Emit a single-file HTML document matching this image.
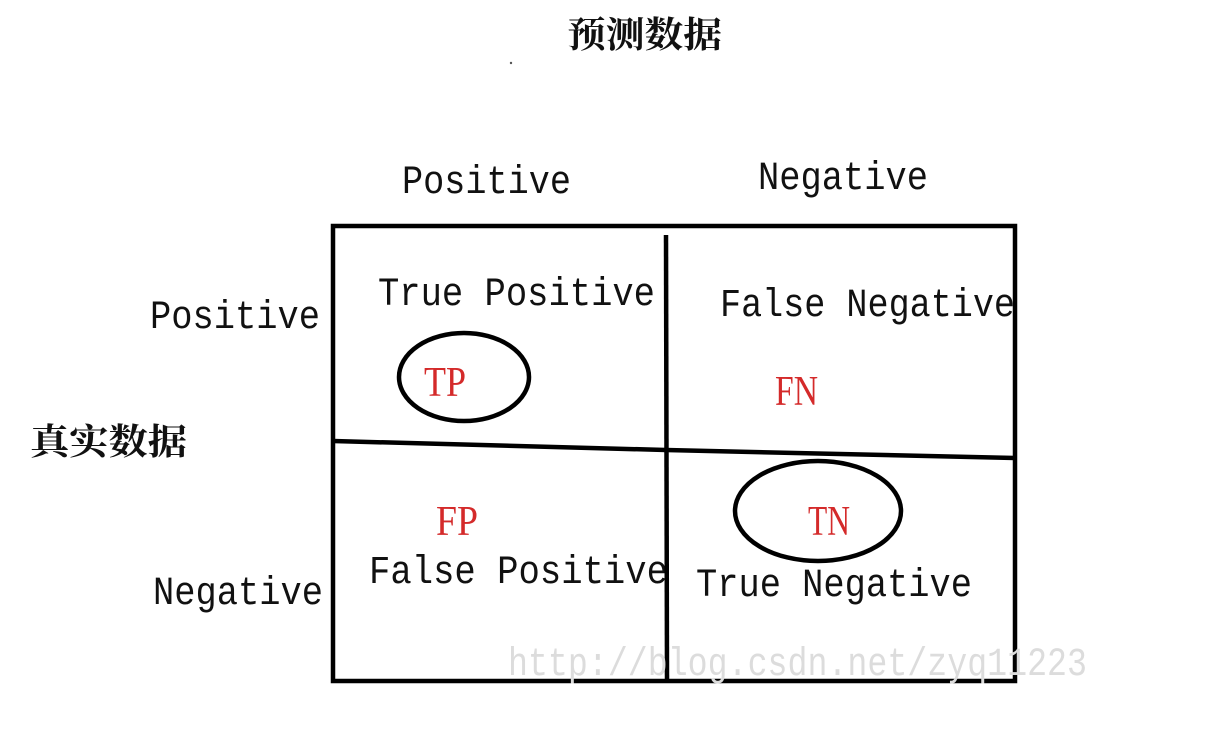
<!DOCTYPE html>
<html><head><meta charset="utf-8"><style>html,body{margin:0;padding:0;background:#fff}svg{display:block}</style></head><body>
<svg width="1212" height="744" viewBox="0 0 1212 744" xmlns="http://www.w3.org/2000/svg">
<rect width="1212" height="744" fill="#fff"/>
<g font-family="'Liberation Mono','Noto Sans CJK SC',monospace" fill="#111" lengthAdjust="spacingAndGlyphs">
<text x="567" y="47" font-size="36" font-family="'Noto Serif CJK SC','Noto Sans CJK SC',serif" font-weight="bold" textLength="155" lengthAdjust="spacingAndGlyphs">预测数据</text>
<text x="30" y="454" font-size="36" font-family="'Noto Serif CJK SC','Noto Sans CJK SC',serif" font-weight="bold" textLength="157" lengthAdjust="spacingAndGlyphs">真实数据</text>
<text x="402" y="193" font-size="40" textLength="169" lengthAdjust="spacingAndGlyphs">Positive</text>
<text x="758" y="189" font-size="40" textLength="170" lengthAdjust="spacingAndGlyphs">Negative</text>
<text x="150" y="328" font-size="40" textLength="170" lengthAdjust="spacingAndGlyphs">Positive</text>
<text x="153" y="604" font-size="40" textLength="170" lengthAdjust="spacingAndGlyphs">Negative</text>
<text x="378" y="305" font-size="40" textLength="277" lengthAdjust="spacingAndGlyphs">True Positive</text>
<text x="720" y="316" font-size="40" textLength="295" lengthAdjust="spacingAndGlyphs">False Negative</text>
<text x="369" y="583" font-size="40" textLength="299" lengthAdjust="spacingAndGlyphs">False Positive</text>
<text x="696" y="596" font-size="40" textLength="276" lengthAdjust="spacingAndGlyphs">True Negative</text>
</g>
<g font-family="'Liberation Serif',serif" fill="#d42a2a" font-size="42">
<text x="424" y="396" textLength="42" lengthAdjust="spacingAndGlyphs">TP</text>
<text x="775" y="405" textLength="43" lengthAdjust="spacingAndGlyphs">FN</text>
<text x="436" y="535" textLength="42" lengthAdjust="spacingAndGlyphs">FP</text>
<text x="808" y="535" textLength="42" lengthAdjust="spacingAndGlyphs">TN</text>
</g>
<g fill="none" stroke="#000" stroke-width="4.5">
<rect x="333" y="226" width="682" height="455"/>
<line x1="666" y1="235" x2="667" y2="681"/>
<polyline points="333,441 666,450 1015,458"/>
<ellipse cx="464" cy="377" rx="65" ry="44"/>
<ellipse cx="818" cy="511" rx="83" ry="50"/>
</g>
<circle cx="511" cy="63" r="1.2" fill="#555"/>
<text x="508" y="675" font-family="'Liberation Mono',monospace" font-size="40" fill="#dcdcdc" textLength="579" lengthAdjust="spacingAndGlyphs">http://blog.csdn.net/zyq11223</text>
</svg>
</body></html>
